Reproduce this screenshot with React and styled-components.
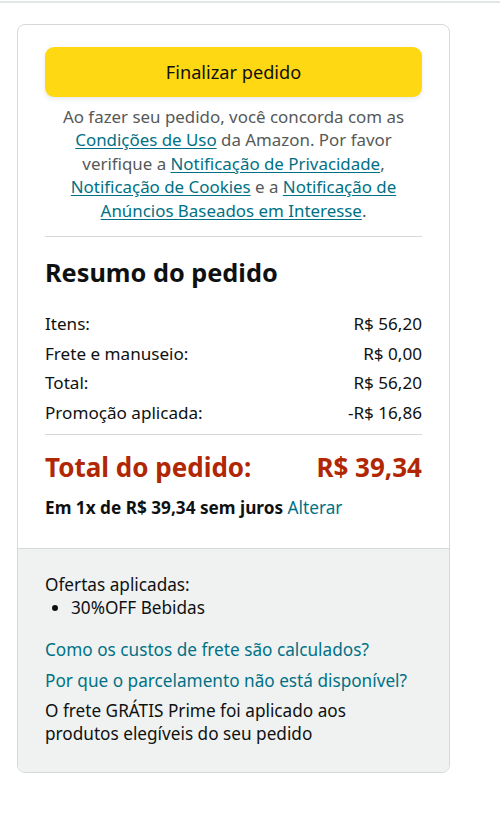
import React from "react";
import styled, { createGlobalStyle } from "styled-components";

const Global = createGlobalStyle`
  html, body { margin: 0; padding: 0; background: #fff; }
  body { font-family: "Noto Sans", "Open Sans", sans-serif; color: #0f1111; }
`;

const TopRule = styled.div`
  height: 2px;
  background: #e3e6e6;
  margin-top: 1px;
`;

const Page = styled.div`
  padding: 21px 0 40px 17px;
`;

const Card = styled.div`
  width: 431px;
  border: 1px solid #d5d9d9;
  border-radius: 8px;
  overflow: hidden;
  background: #fff;
`;

const Main = styled.div`
  padding: 22px 27px 29px 27px;
  border-bottom: 1px solid #d5d9d9;
`;

const PlaceButton = styled.button`
  display: flex;
  align-items: center;
  justify-content: center;
  width: 100%;
  height: 50px;
  border: none;
  border-radius: 9px;
  background: #ffd814;
  box-shadow: 0 2px 5px rgba(213, 217, 217, 0.6);
  font-family: inherit;
  font-size: 18.2px;
  color: #0f1111;
  cursor: pointer;
`;

const Legal = styled.p`
  margin: 8px 0 0;
  padding-bottom: 14px;
  text-align: center;
  font-size: 16.9px;
  line-height: 23.4px;
  color: #565959;
  border-bottom: 1px solid #d5d9d9;
`;

const Link = styled.a`
  color: #007185;
  text-decoration: ${(p) => (p.$underline ? "underline" : "none")};
  text-underline-offset: 2px;
  cursor: pointer;
`;

const Heading = styled.h2`
  margin: 20px 0 22px;
  font-size: 25.3px;
  font-weight: 700;
  line-height: 30px;
  color: #0f1111;
`;

const Rows = styled.div`
  display: flex;
  flex-direction: column;
  padding-bottom: 6px;
  border-bottom: 1px solid #d5d9d9;
`;

const Row = styled.div`
  display: flex;
  justify-content: space-between;
  align-items: center;
  font-size: 17.1px;
  line-height: 29.7px;
  color: #0f1111;
`;

const TotalRow = styled.div`
  display: flex;
  justify-content: space-between;
  align-items: center;
  margin-top: 17px;
  font-size: 26px;
  font-weight: 700;
  line-height: 30px;
  color: #b12704;
`;

const Installment = styled.div`
  margin-top: 15px;
  font-size: 17.2px;
  line-height: 22px;
  color: #0f1111;
`;

const Bold = styled.span`
  font-weight: 700;
`;

const Footer = styled.div`
  background: #f0f2f2;
  padding: 24px 27px 27px;
  font-size: 17.2px;
  line-height: 23px;
  color: #0f1111;
`;

const OfferList = styled.ul`
  margin: 0;
  padding-left: 26px;
  list-style: disc;
`;

const FooterLinks = styled.div`
  display: flex;
  flex-direction: column;
  gap: 8px;
  margin-top: 19px;
`;

const FooterText = styled.div`
  margin-top: -1px;
`;

export default function App() {
  return (
    <>
      <Global />
      <TopRule />
      <Page>
        <Card>
          <Main>
            <PlaceButton>Finalizar pedido</PlaceButton>
            <Legal>
              Ao fazer seu pedido, você concorda com as{" "}
              <Link $underline>Condições de Uso</Link> da Amazon. Por favor
              verifique a <Link $underline>Notificação de Privacidade</Link>,{" "}
              <Link $underline>Notificação de Cookies</Link> e a{" "}
              <Link $underline>Notificação de Anúncios Baseados em Interesse</Link>.
            </Legal>
            <Heading>Resumo do pedido</Heading>
            <Rows>
              <Row><span>Itens:</span><span>R$ 56,20</span></Row>
              <Row><span>Frete e manuseio:</span><span>R$ 0,00</span></Row>
              <Row><span>Total:</span><span>R$ 56,20</span></Row>
              <Row><span>Promoção aplicada:</span><span>-R$ 16,86</span></Row>
            </Rows>
            <TotalRow><span>Total do pedido:</span><span>R$ 39,34</span></TotalRow>
            <Installment>
              <Bold>Em 1x de R$ 39,34 sem juros</Bold> <Link>Alterar</Link>
            </Installment>
          </Main>
          <Footer>
            <div>Ofertas aplicadas:</div>
            <OfferList>
              <li>30%OFF Bebidas</li>
            </OfferList>
            <FooterLinks>
              <Link>Como os custos de frete são calculados?</Link>
              <Link>Por que o parcelamento não está disponível?</Link>
              <FooterText>O frete GRÁTIS Prime foi aplicado aos produtos elegíveis do seu pedido</FooterText>
            </FooterLinks>
          </Footer>
        </Card>
      </Page>
    </>
  );
}
